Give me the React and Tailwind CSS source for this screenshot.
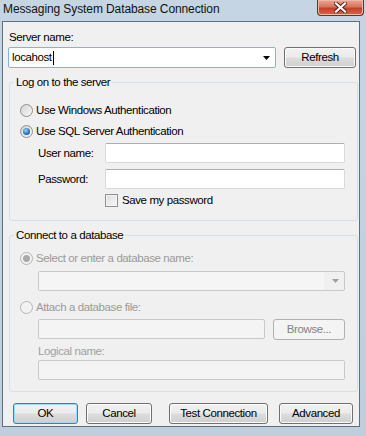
import React from "react";

const font = "font-['Liberation_Sans',Arial,sans-serif]";
const btnBg =
  "bg-[linear-gradient(to_bottom,#f2f2f2_0%,#ebebeb_48%,#dddddd_52%,#cfcfcf_100%)]";

const Button = ({ children, className = "", primary, disabled }) => {
  let look = `border-[#707070] shadow-[inset_0_0_0_1px_#fbfbfb] ${btnBg} text-black`;
  if (primary) look = `border-[#3c7fb1] shadow-[inset_0_0_0_1px_#9edaf5] ${btnBg} text-black`;
  if (disabled) look = "border-[#adb2b5] bg-[#f4f4f4] text-[#838383]";
  return (
    <div
      className={`flex h-[21px] items-center justify-center rounded-[3px] border ${look} ${className}`}
    >
      {children}
    </div>
  );
};

const Radio = ({ checked, disabled }) => (
  <span
    className={`flex h-[13px] w-[13px] shrink-0 items-center justify-center rounded-full border ${
      disabled
        ? "border-[#b4b4b4] bg-[#f2f2f2]"
        : "border-[#8e8f8f] bg-[linear-gradient(135deg,#d4d4d4,#f8f8f8)]"
    }`}
  >
    {checked && (
      <span
        className={`h-[7px] w-[7px] rounded-full ${
          disabled
            ? "bg-[#a9a9a9]"
            : "bg-[radial-gradient(circle_at_40%_35%,#8fd3f6,#2a6fb6_60%,#0e3c75)]"
        }`}
      />
    )}
  </span>
);

const Field = ({ className = "", disabled, children }) => (
  <div
    className={`flex h-[20px] items-center rounded-[2px] border ${
      disabled
        ? "border-[#c9c9c9] bg-[#f4f4f4]"
        : "border-[#d6d9de] border-t-[#abadb3] bg-white"
    } ${className}`}
  >
    {children}
  </div>
);

const Arrow = ({ color }) => (
  <svg width="7" height="4" viewBox="0 0 7 4">
    <path d="M0 0h7L3.5 4z" fill={color} />
  </svg>
);

const CloseButton = () => (
  <div className="mr-[2px] flex h-[16px] w-[47px] items-center justify-center rounded-b-[4px] border border-t-0 border-[#7a2a1e] bg-[linear-gradient(to_bottom,#e9a796_0%,#d7745f_45%,#c3412a_55%,#d9634a_100%)] shadow-[inset_0_0_0_1px_#f0b7a8]">
    <svg width="13" height="11" viewBox="0 0 13 11">
      <path
        d="M2 1.5l9 8M11 1.5l-9 8"
        stroke="#5a1e14"
        strokeWidth="4"
        strokeLinecap="square"
      />
      <path
        d="M2 1.5l9 8M11 1.5l-9 8"
        stroke="#ffffff"
        strokeWidth="2.2"
        strokeLinecap="square"
      />
    </svg>
  </div>
);

export default function App() {
  return (
    <div
      className={`${font} flex h-[436px] w-[366px] flex-col bg-[linear-gradient(to_bottom,#c6d5e4,#bfcedd)] text-[11.5px] leading-[13px] tracking-[-0.4px] text-black`}
    >
      {/* title bar */}
      <div className="flex h-[21px] items-start justify-between">
        <div className="pl-[3px] pt-[2px] text-[12px] leading-[15px] tracking-[-0.1px] text-[#111]">
          Messaging System Database Connection
        </div>
        <CloseButton />
      </div>

      <div className="flex">
        <div className="w-[2px]" />
        <div className="h-[406px] w-[358px] border border-[#5f6f82] bg-[#f0f0f0]">
          <div className="mt-[9px] h-[13px] pl-[6px]">Server name:</div>

          <div className="mt-[3px] flex">
            <div className="ml-[5px] flex h-[21px] w-[268px] items-center justify-between rounded-[2px] border border-[#7eb4ea] bg-white pl-[3px] pr-[5px]">
              <span className="flex items-center">
                locahost
                <span className="ml-[1px] inline-block h-[14px] w-[1px] bg-black" />
              </span>
              <Arrow color="#000" />
            </div>
            <Button className="ml-[8px] w-[72px]">Refresh</Button>
          </div>

          <fieldset className="ml-[6px] mt-[8px] w-[349px] rounded-[3px] border border-[#d5dfe5] pb-[13px]">
            <legend className="ml-[4px] px-[2px] leading-[13px]">
              Log on to the server
            </legend>
            <div className="ml-[10px] mt-[15px] flex h-[13px] items-center gap-[3px]">
              <Radio />
              <span>Use Windows Authentication</span>
            </div>
            <div className="ml-[10px] mt-[8px] flex h-[13px] items-center gap-[3px]">
              <Radio checked />
              <span>Use SQL Server Authentication</span>
            </div>
            <div className="ml-[28px] mt-[5px] flex h-[20px] items-center">
              <span className="w-[67px]">User name:</span>
              <Field className="w-[240px]" />
            </div>
            <div className="ml-[28px] mt-[6px] flex h-[20px] items-center">
              <span className="w-[67px]">Password:</span>
              <Field className="w-[240px]" />
            </div>
            <div className="ml-[95px] mt-[5px] flex h-[13px] items-center gap-[4px]">
              <span className="h-[13px] w-[13px] border border-[#8e8f8f] bg-[linear-gradient(135deg,#dcdcdc,#f8f8f8)] shadow-[inset_0_0_0_1px_#f4f4f4]" />
              <span>Save my password</span>
            </div>
          </fieldset>

          <fieldset className="ml-[6px] mt-[8px] w-[349px] rounded-[3px] border border-[#d5dfe5] pb-[11px]">
            <legend className="ml-[4px] px-[2px] leading-[13px]">
              Connect to a database
            </legend>
            <div className="ml-[10px] mt-[10px] flex h-[13px] items-center gap-[3px] text-[#9a9a9a]">
              <Radio checked disabled />
              <span>Select or enter a database name:</span>
            </div>
            <div className="ml-[28px] mt-[6px] flex h-[20px] w-[307px] items-center justify-between rounded-[2px] border border-[#c9c9c9] bg-[#f0f0f0]">
              <div className="h-full w-[285px] bg-[#f5f5f5]" />
              <div className="pr-[5px]">
                <Arrow color="#a0a0a0" />
              </div>
            </div>
            <div className="ml-[10px] mt-[10px] flex h-[13px] items-center gap-[3px] text-[#9a9a9a]">
              <Radio disabled />
              <span>Attach a database file:</span>
            </div>
            <div className="ml-[28px] mt-[5px] flex">
              <Field disabled className="w-[227px]" />
              <Button disabled className="ml-[8px] w-[72px]">
                Browse...
              </Button>
            </div>
            <div className="ml-[28px] mt-[5px] h-[13px] text-[#a0a0a0]">
              Logical name:
            </div>
            <Field disabled className="ml-[28px] mt-[2px] w-[307px]" />
          </fieldset>

          <div className="mt-[11px] flex">
            <Button primary className="ml-[10px] w-[65px]">
              OK
            </Button>
            <Button className="ml-[8px] w-[66px]">Cancel</Button>
            <Button className="ml-[17px] w-[99px]">Test Connection</Button>
            <Button className="ml-[11px] w-[74px]">Advanced</Button>
          </div>
        </div>
      </div>
    </div>
  );
}
